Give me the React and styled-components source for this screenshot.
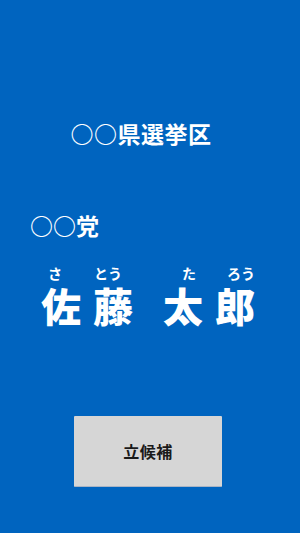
import React from 'react';
import styled, { createGlobalStyle } from 'styled-components';

const GlobalStyle = createGlobalStyle`
  html, body {
    margin: 0;
    padding: 0;
    background: #0064bf;
  }
  body {
    font-family: "Noto Sans CJK JP", "Noto Sans", sans-serif;
  }
`;

const Screen = styled.div`
  width: 300px;
  height: 533px;
  background: #0064bf;
  display: flex;
  flex-direction: column;
  color: #fff;
  overflow: hidden;
`;

const District = styled.div`
  margin-top: 118px;
  padding-right: 18px;
  text-align: center;
  font-size: 23px;
  line-height: 30px;
  font-weight: 700;
  letter-spacing: 0.5px;
`;

const Party = styled.div`
  margin-top: 62px;
  padding-left: 30px;
  font-size: 23px;
  line-height: 30px;
  font-weight: 700;
`;

const NameRow = styled.div`
  margin-top: 26px;
  padding-left: 41px;
  display: flex;
  gap: 12px;
`;

const NameChar = styled.div`
  display: flex;
  flex-direction: column;
  align-items: center;
  width: 40px;
  margin-left: ${p => (p.$gapBefore ? `${p.$gapBefore}px` : '0')};
`;

const Ruby = styled.span`
  font-size: 14px;
  line-height: 14px;
  height: 14px;
  margin-bottom: 2px;
  font-weight: 700;
  white-space: nowrap;
  transform: translateX(${p => p.$shift || 0}px);
`;

const Kanji = styled.span`
  font-size: 40px;
  line-height: 44px;
  margin-top: 1px;
  font-weight: 900;
`;

const ButtonArea = styled.div`
  margin-top: 89px;
  padding-left: 74px;
`;

const RunButton = styled.button`
  width: 148px;
  height: 71px;
  background: #d6d6d6;
  border: none;
  border-bottom: 1px solid #a9b4c4;
  border-radius: 1px;
  font-family: "Noto Sans CJK JP", sans-serif;
  font-size: 16px;
  font-weight: 700;
  color: #1a1a1a;
  letter-spacing: 0.5px;
  padding: 0;
  cursor: pointer;
`;

const name = [
  { kanji: '佐', ruby: 'さ', shift: -6 },
  { kanji: '藤', ruby: 'とう', shift: -5 },
  { kanji: '太', ruby: 'た', shift: 6, gapBefore: 18 },
  { kanji: '郎', ruby: 'ろう', shift: 6 },
];

export default function App() {
  return (
    <>
      <GlobalStyle />
      <Screen>
        <District>○○県選挙区</District>
        <Party>○○党</Party>
        <NameRow>
          {name.map(c => (
            <NameChar key={c.kanji} $gapBefore={c.gapBefore}>
              <Ruby $shift={c.shift}>{c.ruby}</Ruby>
              <Kanji>{c.kanji}</Kanji>
            </NameChar>
          ))}
        </NameRow>
        <ButtonArea>
          <RunButton>立候補</RunButton>
        </ButtonArea>
      </Screen>
    </>
  );
}
